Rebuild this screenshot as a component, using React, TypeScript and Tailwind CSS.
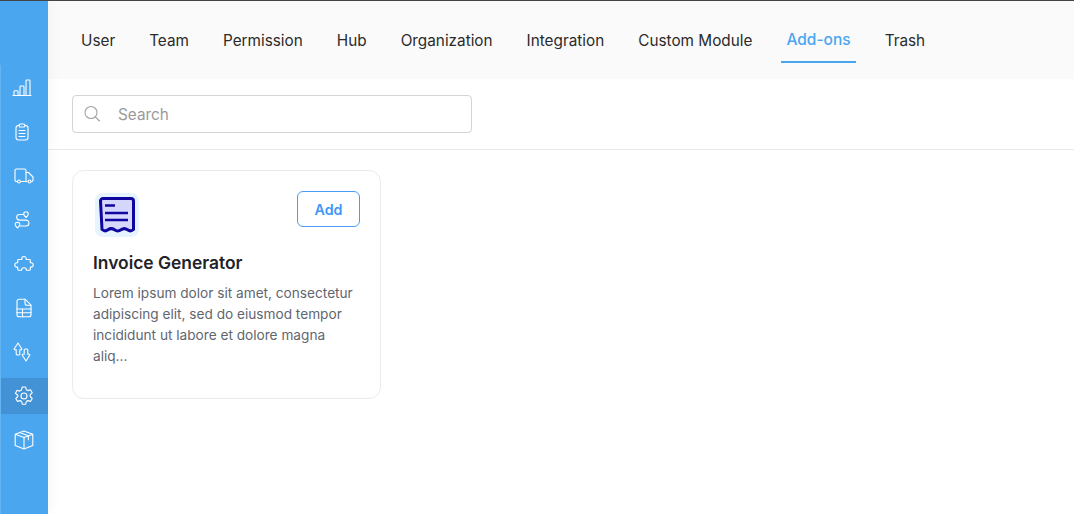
const font = { fontFamily: "Inter, 'Liberation Sans', sans-serif" };

function Ico({ children }: { children: React.ReactNode }) {
  return (
    <svg width="20" height="20" viewBox="0 0 20 20" fill="none" stroke="white" strokeWidth="1.1" strokeLinecap="round" strokeLinejoin="round" className="overflow-visible">
      {children}
    </svg>
  );
}

const icons = [
  <Ico><path d="M-1 17.500h18M0 17.500v-4a.8.8 0 0 1 .8-.8h2.400a.8.8 0 0 1 .8.8v4M6 17.500V8.800a.8.8 0 0 1 .8-.8h2.400a.8.8 0 0 1 .8.8v8.700M12 17.500V2.800a.8.8 0 0 1 .8-.8h2.400a.8.800 0 0 1 .8.800v14.700" /></Ico>,
  <Ico><path d="M5 3.500H4.500A2.500 2.500 0 0 0 2 6v9.500A2.500 2.500 0 0 0 4.500 18h7a2.500 2.500 0 0 0 2.500-2.500V6a2.500 2.500 0 0 0-2.500-2.500H11" /><rect x="5" y="2" width="6" height="3" rx="1.300" /><path d="M5 8.500h6M5 11.500h6M5 14.500h6" /></Ico>,
  <Ico><path d="M3.500 15.500H2.500A1.500 1.500 0 0 1 1 14V4.500A1.500 1.500 0 0 1 2.500 3h8A1.500 1.500 0 0 1 12 4.500v11H6.500M12 6.500h2.500l4.500 4.500v3a1.500 1.500 0 0 1-1.500 1.500M12 15.500h1" /><circle cx="5" cy="15.500" r="1.500" /><circle cx="15.500" cy="15.500" r="1.500" /></Ico>,
  <Ico><path d="M9.500 4.500H5.500a2.800 2.800 0 0 0 0 5.600h6.500a2.900 2.900 0 0 1 0 5.900H6" /><path d="M12 7.500c-1.400-1.300-2.300-2.300-2.300-3.500a2.300 2.300 0 0 1 4.600 0c0 1.200-.9 2.200-2.300 3.500z" /><path d="M3.500 18c-1.400-1.300-2.300-2.300-2.300-3.500a2.300 2.300 0 0 1 4.600 0c0 1.200-.9 2.200-2.300 3.500z" /></Ico>,
  <Ico><path d="M7.800 5.500v-.8a2.200 2.200 0 0 1 4.400 0v.8h3.300a.8.800 0 0 1 .8.800v2.400h.7a2.200 2.200 0 0 1 0 4.400h-.7v2.300a.8.800 0 0 1-.8.800h-3a2.500 2.500 0 0 0-5 0h-3a.8.800 0 0 1-.8-.8v-2.300H3a2.200 2.200 0 0 1 0-4.400h.7V6.300a.8.800 0 0 1 .8-.8z" /></Ico>,
  <Ico><path d="M11 1.200H5A2 2 0 0 0 3 3.200v13.600a2 2 0 0 0 2 2h10a2 2 0 0 0 2-2V7.200z" /><path d="M11 1.200v4a2 2 0 0 0 2 2h4M3 11h14M3 14.800h14M8.500 11v7.800" /></Ico>,
  <Ico><path d="M4 1 .3 6.800c-.3.500 0 1 .5 1H2.200v4.200a1 1 0 0 0 1 1h1.600a1 1 0 0 0 1-1V7.800h1.400c.5 0 .8-.5.500-1z" /><path d="M12 19l3.700-5.800c.3-.5 0-1-.5-1h-1.400V8a1 1 0 0 0-1-1h-1.600a1 1 0 0 0-1 1v4.200H8.800c-.5 0-.8.500-.5 1z" /></Ico>,
  <Ico><path d="M8.300 1h3.400l.6 2.700 1.600.9 2.600-.8 1.700 3-2 1.900v1.800l2 1.900-1.700 3-2.600-.8-1.600.9-.6 2.700H8.300l-.6-2.700-1.600-.9-2.600.8-1.700-3 2-1.900V9.200L1.400 7.300l1.700-3 2.600.8 1.600-.9z" /><circle cx="10" cy="10" r="3" /></Ico>,
  <Ico><path d="M10 1 1.200 4.200v11.400L10 19l8.800-3.400V4.200zM1.200 4.200 10 7.400l8.800-3.200M10 7.400V19M5.600 2.600l8.800 3.200v4" /></Ico>,
];

const tabs = ["User", "Team", "Permission", "Hub", "Organization", "Integration", "Custom Module", "Add-ons", "Trash"];

export default function App() {
  return (
    <div className="flex h-[514px] w-[1074px] overflow-hidden border-t border-[#444444] bg-white" style={font}>
      <aside className="relative z-10 flex w-12 shrink-0 flex-col bg-[#4ba6f0] pt-16 shadow-[2px_0_12px_rgba(0,0,0,0.04)]">
        <div className="flex flex-1 flex-col gap-2 border-l border-[#66b3f2] pt-[5px]">
          {icons.map((ic, i) => (
            <div key={i} className={`flex h-[36px] shrink-0 items-center justify-center pr-px ${i === 7 ? "bg-[#4392d6]" : ""}`}>
              {ic}
            </div>
          ))}
        </div>
      </aside>
      <main className="flex min-w-0 flex-1 flex-col bg-white">
        <nav className="flex h-[78px] gap-6 bg-[#fafafa] pl-7 pt-[23px]">
          {tabs.map((t) => (
            <div key={t} className={`h-[39px] px-[5px] leading-[22px] ${t === "Add-ons" ? "border-b-2 border-[#4ba6f0] pt-[5px] text-[15.5px] font-medium text-[#4ba6f0]" : "pt-[6px] text-[15.32px] text-[#2b2b2b]"}`}>
              {t}
            </div>
          ))}
        </nav>
        <div className="border-b border-[#ebebeb] px-6 pb-4 pt-4">
          <div className="flex h-[38px] w-[400px] items-center rounded-[4px] border border-[#d4d4d4] bg-white pl-[10px]">
            <svg width="18" height="18" viewBox="0 0 18 18" fill="none" stroke="#a3a3a3" strokeWidth="1.100" strokeLinecap="round">
              <circle cx="8" cy="7.500" r="6" />
              <path d="M12.500 12l4 4" />
            </svg>
            <span className="ml-[17px] pt-[2px] text-[15.3px] text-[#9a9a9a]">Search</span>
          </div>
        </div>
        <div className="px-6 pt-5">
          <div className="h-[229px] w-[309px] rounded-xl border border-[#ebebeb] bg-white px-5 pt-5">
            <div className="flex items-start justify-between">
              <svg width="44" height="44" viewBox="0 0 44 44" fill="none" className="ml-[2px] mt-[2px]">
                <rect width="44" height="44" rx="8" fill="#e5f4ff" />
                <path d="M5.500 8a2.500 2.500 0 0 1 2.500-2.500h28a2.500 2.500 0 0 1 2.500 2.500v28.500c-2 1.800-4 1.800-6 .3-2.400-1.800-4-1.800-6.500 0s-4 1.800-6.500 0-4-1.800-6.500 0c-2 1.500-4 1.500-6-.3z" fill="#d5d6fb" stroke="#10069f" strokeWidth="3" strokeLinejoin="round" />
                <path d="M10 12.500h10M10 20h23M10 27h23" stroke="#10069f" strokeWidth="2.600" />
              </svg>
              <button className="h-9 w-[63px] rounded-md border border-[#4a9bf5] bg-white pt-[2px] text-[14.3px] font-semibold text-[#3f97f7]">Add</button>
            </div>
            <h3 className="mt-[14px] text-[17.4px] font-semibold leading-[24px] text-[#1f2329]">Invoice Generator</h3>
            <p className="mt-[8px] text-[13.65px] leading-[21px] text-[#5f6670]">
              Lorem ipsum dolor sit amet, consectetur adipiscing elit, sed do eiusmod tempor incididunt ut labore et dolore magna aliq...
            </p>
          </div>
        </div>
      </main>
    </div>
  );
}
